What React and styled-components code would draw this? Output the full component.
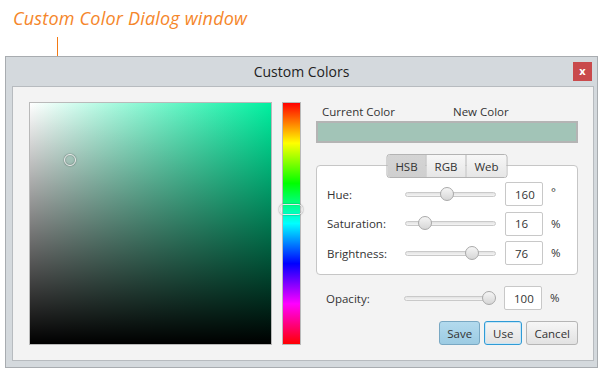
import React from 'react';
import styled, { createGlobalStyle } from 'styled-components';

const GlobalStyle = createGlobalStyle`
    body {
        margin: 0;
        background: #ffffff;
        font-family: "Open Sans", "Noto Sans", sans-serif;
        color: #333333;
    }
`;

const Page = styled.div`
    width: 601px;
    height: 370px;
    overflow: hidden;
    display: flex;
    flex-direction: column;
`;

const Caption = styled.div`
    height: 37px;
    padding: 7px 0 0 13px;
    box-sizing: border-box;
    font-family: "Open Sans", sans-serif;
    font-style: italic;
    font-size: 18px;
    line-height: 22px;
    color: #f5862a;
    letter-spacing: 0.2px;
`;

const Leader = styled.div`
    width: 1px;
    height: 19px;
    margin-left: 57px;
    background: #f37a14;
`;

const Window = styled.div`
    margin-left: 5px;
    width: 593px;
    height: 312px;
    box-sizing: border-box;
    background: #d4d9dd;
    border: 1px solid #a8acb0;
    display: flex;
    flex-direction: column;
`;

const TitleBar = styled.div`
    height: 29px;
    position: relative;
    display: flex;
    align-items: center;
    justify-content: center;
    font-size: 14px;
    color: #222;
`;

const CloseButton = styled.div`
    position: absolute;
    right: 5px;
    top: 5px;
    width: 19px;
    height: 19px;
    background: #c94a4c;
    color: #fff;
    font-size: 11px;
    font-weight: 700;
    display: flex;
    align-items: center;
    justify-content: center;
    line-height: 1;
    padding-bottom: 2px;
    box-sizing: border-box;
`;

const Panel = styled.div`
    margin: 0 3px 6px 6px;
    flex: 1;
    background: #f3f3f3;
    border: 1px solid #b7bbbf;
    padding: 15px 14px 0 16px;
    display: flex;
    align-items: flex-start;
`;

const SVArea = styled.div`
    position: relative;
    width: 243px;
    height: 243px;
    box-sizing: border-box;
    border: 1px solid #b9b9b9;
    background:
        linear-gradient(to top, #000 0%, rgba(0,0,0,0) 100%),
        linear-gradient(to right, #ffffff 0%, hsl(${p => p.$hue}, 100%, 47%) 100%);
`;

const SVCursor = styled.div`
    position: absolute;
    width: 10px;
    height: 10px;
    margin: -6px 0 0 -6px;
    border-radius: 50%;
    border: 1.5px solid #e8e8e8;
    box-shadow: 0 0 1.5px rgba(0,0,0,0.6), inset 0 0 1.5px rgba(0,0,0,0.5);
`;

const HueBar = styled.div`
    position: relative;
    margin-left: 10px;
    width: 19px;
    height: 243px;
    box-sizing: border-box;
    border: 1px solid #b9b9b9;
    background: linear-gradient(to bottom, #ff0000, #ffff00, #00ff00, #00ffff, #0000ff, #ff00ff, #ff0000);
`;

const HueThumb = styled.div`
    position: absolute;
    left: -4px;
    width: 22px;
    height: 9px;
    margin-top: -6px;
    border-radius: 5px;
    border: 1.5px solid #e9e9e9;
    box-shadow: 0 0 1.5px rgba(0,0,0,0.55), inset 0 0 1px rgba(0,0,0,0.4);
`;

const RightColumn = styled.div`
    margin-left: 15px;
    width: 262px;
    display: flex;
    flex-direction: column;
`;

const SwatchLabels = styled.div`
    display: flex;
    font-size: 11.5px;
    height: 18px;
    align-items: center;
    padding-left: 6px;
`;

const SwatchLabel = styled.div`
    width: ${p => p.$w}px;
`;

const Swatch = styled.div`
    margin-top: 1px;
    height: 22px;
    box-sizing: border-box;
    border: 2px solid #b4b4b4;
    background: ${p => p.$color};
`;

const TabBox = styled.div`
    position: relative;
    margin-top: 22px;
    height: 110px;
    box-sizing: border-box;
    border: 1.5px solid #c6c6c6;
    border-radius: 4px;
    background: #ffffff;
    padding: 16px 0 0 10px;
    display: flex;
    flex-direction: column;
    gap: 5.5px;
`;

const Tabs = styled.div`
    position: absolute;
    top: -12px;
    left: 50%;
    transform: translateX(-50%);
    display: flex;
    border: 1px solid #b3b3b3;
    border-radius: 3px;
    overflow: hidden;
`;

const Tab = styled.div`
    width: ${p => p.$w}px;
    height: 22px;
    display: flex;
    align-items: center;
    justify-content: center;
    font-size: 11.5px;
    background: ${p => (p.$active ? 'linear-gradient(#d4d4d4, #cfcfcf)' : 'linear-gradient(#f7f7f7, #e6e6e6)')};
    & + & {
        border-left: 1px solid #b8b8b8;
    }
`;

const Row = styled.div`
    height: 24px;
    display: flex;
    align-items: center;
    font-size: 11.5px;
`;

const RowLabel = styled.div`
    width: 78px;
`;

const Track = styled.div`
    position: relative;
    width: 91px;
    height: 5px;
    border-radius: 3px;
    border: 1px solid #c9c9c9;
    background: linear-gradient(#e2e2e2, #f4f4f4);
    box-sizing: border-box;
`;

const Thumb = styled.div`
    position: absolute;
    top: -6px;
    width: 14px;
    height: 14px;
    margin-left: -7px;
    border-radius: 50%;
    box-sizing: border-box;
    border: 1px solid #a9a9a9;
    background: linear-gradient(#f5f5f5, #d6d6d6);
`;

const ValueField = styled.div`
    margin-left: 9px;
    width: 38px;
    height: 24px;
    box-sizing: border-box;
    border: 1px solid #c8c8c8;
    border-radius: 2px;
    background: #fff;
    padding-left: 9px;
    display: flex;
    align-items: center;
    font-size: 11.5px;
`;

const Unit = styled.div`
    margin-left: 8px;
    font-size: 11.5px;
    line-height: 1;
    align-self: ${p => (p.$sup ? 'flex-start' : 'center')};
    margin-top: ${p => (p.$sup ? '4px' : '0')};
`;

const OpacityRow = styled(Row)`
    margin-top: 11px;
    padding-left: 10px;
`;

const Buttons = styled.div`
    margin-top: 11px;
    display: flex;
    justify-content: flex-end;
    gap: 4px;
`;

const Button = styled.div`
    height: 24px;
    padding: 0 ${p => p.$pad}px;
    box-sizing: border-box;
    display: flex;
    align-items: center;
    font-size: 11.5px;
    border-radius: 3px;
    border: 1px solid ${p => (p.$kind === 'default' ? '#79a8c3' : p.$kind === 'focus' ? '#2f9bd6' : '#b5b5b5')};
    background: ${p => (p.$kind === 'default' ? 'linear-gradient(#b3daee, #9ccbe3)' : 'linear-gradient(#f6f6f6, #e2e2e2)')};
    box-shadow: ${p => (p.$kind === 'focus' ? 'inset 0 0 0 1px #c9e6f5' : 'none')};
`;

function Slider({ value }) {
    return (
        <Track>
            <Thumb style={{ left: `${7 + value * 77}px` }} />
        </Track>
    );
}

function ValueRow({ label, value, ratio, unit, sup }) {
    return (
        <Row>
            <RowLabel>{label}</RowLabel>
            <Slider value={ratio} />
            <ValueField>{value}</ValueField>
            <Unit $sup={sup}>{unit}</Unit>
        </Row>
    );
}

export default function App() {
    const hue = 160;
    return (
        <Page>
            <GlobalStyle />
            <Caption>Custom Color Dialog window</Caption>
            <Leader />
            <Window>
                <TitleBar>
                    Custom Colors
                    <CloseButton>x</CloseButton>
                </TitleBar>
                <Panel>
                    <SVArea $hue={hue}>
                        <SVCursor style={{ left: '40px', top: '57px' }} />
                    </SVArea>
                    <HueBar>
                        <HueThumb style={{ top: `${(hue / 360) * 241}px` }} />
                    </HueBar>
                    <RightColumn>
                        <SwatchLabels>
                            <SwatchLabel $w={131}>Current Color</SwatchLabel>
                            <SwatchLabel $w={100}>New Color</SwatchLabel>
                        </SwatchLabels>
                        <Swatch $color="#a2c4b7" />
                        <TabBox>
                            <Tabs>
                                <Tab $w={38} $active>HSB</Tab>
                                <Tab $w={39}>RGB</Tab>
                                <Tab $w={40}>Web</Tab>
                            </Tabs>
                            <ValueRow label="Hue:" value="160" ratio={160 / 360} unit="°" sup />
                            <ValueRow label="Saturation:" value="16" ratio={0.16} unit="%" />
                            <ValueRow label="Brightness:" value="76" ratio={0.76} unit="%" />
                        </TabBox>
                        <OpacityRow>
                            <RowLabel>Opacity:</RowLabel>
                            <Slider value={1} />
                            <ValueField>100</ValueField>
                            <Unit>%</Unit>
                        </OpacityRow>
                        <Buttons>
                            <Button $kind="default" $pad={7}>Save</Button>
                            <Button $kind="focus" $pad={8}>Use</Button>
                            <Button $pad={7}>Cancel</Button>
                        </Buttons>
                    </RightColumn>
                </Panel>
            </Window>
        </Page>
    );
}
